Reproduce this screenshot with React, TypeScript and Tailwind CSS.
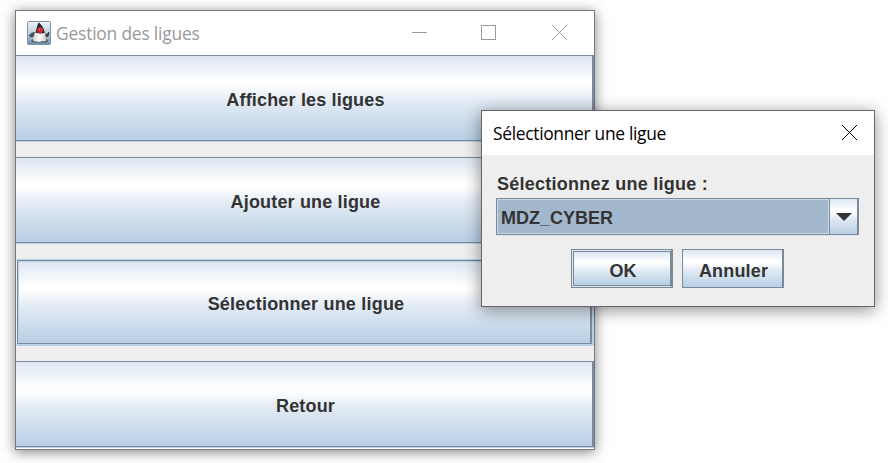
import type { ReactNode } from "react";

const metal =
  "bg-[linear-gradient(to_bottom,#dce7f2_0%,#ffffff_30%,#ffffff_34%,#e3ebf5_54%,#b8cfe5_100%)]";

function Duke() {
  return (
    <svg width="24" height="24" viewBox="0 0 24 24" className="block shrink-0">
      <defs>
        <linearGradient id="tile" x1="0" y1="0" x2="0" y2="1">
          <stop offset="0" stopColor="#eef4fa" />
          <stop offset="0.55" stopColor="#bccddd" />
          <stop offset="1" stopColor="#6f8ba8" />
        </linearGradient>
        <linearGradient id="belly" x1="0" y1="0" x2="1" y2="0">
          <stop offset="0" stopColor="#d9d6d3" />
          <stop offset="0.5" stopColor="#ffffff" />
          <stop offset="1" stopColor="#c9c5c0" />
        </linearGradient>
      </defs>
      <rect x="0.5" y="0.5" width="23" height="23" rx="1" fill="url(#tile)" stroke="#7c93aa" />
      <path d="M1.5 14.5L5 11.5L9 11L8 15.5L4 16.5Z" fill="#48525e" />
      <path d="M17 12L20 13L21.5 10.5L22.5 12L21.5 15.5L18 16.5Z" fill="#343d48" />
      <path d="M4 20Q6 22.5 9 21.5L19 21.5Q21 21 21 19L18 17L7 17Z" fill="#4d5a68" />
      <path d="M10 7C14 6 17.5 9 18.3 13C18.8 16 20 18.5 19 20C17.5 21 16 19.5 14 20.5C11 21.5 9 20 6.5 20.2C5.5 18 7.5 12 10 7Z" fill="url(#belly)" />
      <path d="M11.7 1.5C14.5 3.5 17.3 7.5 17.8 12C15.5 12.8 11 12.5 8.3 12C9.5 9 10 4 11.7 1.5Z" fill="#2a292b" />
      <path d="M8.5 11.5Q12.5 14 17.5 12L17.5 14L8 14Z" fill="#eeece9" />
      <circle cx="13.2" cy="9.2" r="2.9" fill="#d92531" />
      <circle cx="12.6" cy="8.2" r="0.8" fill="#f26d68" />
    </svg>
  );
}

function CloseGlyph({ className = "" }: { className?: string }) {
  return (
    <svg width="15" height="16" viewBox="0 0 15 16" fill="none" stroke="currentColor" className={`block ${className}`}>
      <path d="M0 0L15 15M15 0L0 15" />
    </svg>
  );
}

function MenuButton({ children }: { children: ReactNode }) {
  return (
    <div className="h-[87px] shrink-0 border-b border-[#b8cfe5]">
      <button
        className={`block h-[86px] w-full border-y border-r-2 border-[#7a8a99] pl-[3px] pt-1 text-center leading-[20px] tracking-[0.17px] ${metal}`}
      >
        {children}
      </button>
    </div>
  );
}

export default function App() {
  return (
    <main className="relative h-[463px] w-[888px] overflow-hidden bg-white font-['Liberation_Sans',Arial,sans-serif] text-[18px] font-bold text-[#333333]">
      <section className="absolute left-[15px] top-[10px] flex h-[440px] w-[580px] flex-col border border-[#777a7d] bg-[#eeeeee] shadow-[0_2px_12px_rgba(0,0,0,0.5)]">
        <header className="flex h-11 shrink-0 items-center bg-white pl-[11px] pr-[27px] text-[#999999]">
          <Duke />
          <h1 className="ml-[5px] flex-1 whitespace-nowrap font-['Open_Sans','Noto_Sans',sans-serif] text-[17.4px] font-normal tracking-[-0.19px]">
            Gestion des ligues
          </h1>
          <div className="flex items-center">
            <svg width="15" height="16" className="block" stroke="currentColor">
              <path d="M0 7.5H15" />
            </svg>
            <svg width="15" height="16" className="ml-[54px] block" fill="none" stroke="currentColor">
              <rect x="0.5" y="0.5" width="14" height="14" />
            </svg>
            <CloseGlyph className="ml-14" />
          </div>
        </header>
        <div className="flex flex-col">
          <MenuButton>Afficher les ligues</MenuButton>
          <div className="h-[15px]" />
          <MenuButton>Ajouter une ligue</MenuButton>
          <div className="h-[15px]" />
          <div className="h-[87px] border-b-2 border-l border-r-2 border-t border-[#b8cfe5] border-l-[#e8eff7]">
            <button className="block h-[84px] w-full border border-r-2 border-[#7a8a99]">
              <span className={`block h-full border-l border-t border-[#b8cfe5] pl-[3px] pt-8 leading-[20px] tracking-[0.21px] ${metal}`}>
                Sélectionner une ligue
              </span>
            </button>
          </div>
          <div className="h-[15px]" />
          <MenuButton>Retour</MenuButton>
          <div className="h-px bg-white" />
        </div>
      </section>

      <section className="absolute left-[481px] top-[110px] h-[197px] w-[394px] border border-[#646769] bg-[#eeeeee] shadow-[0_3px_16px_rgba(0,0,0,0.45)]">
        <header className="flex h-11 items-center justify-between bg-white pl-[11px] pr-[17px] text-black">
          <h2 className="whitespace-nowrap font-['Open_Sans','Noto_Sans',sans-serif] text-[17.4px] font-normal tracking-[-0.31px]">
            Sélectionner une ligue
          </h2>
          <CloseGlyph />
        </header>
        <div className="pl-[14px] pr-[15px] pt-[19px]">
          <div className="h-6 pl-px leading-[20px] tracking-[0.25px]">Sélectionnez une ligue :</div>
          <div className="flex h-[38px] border-b border-[#dce7f2]">
            <div className="h-[37px] flex-1 border border-r-0 border-[#7a8a99]">
              <div className="h-full border border-[#c8d9e9] bg-[#a3b8cc] pl-[3px] leading-[36px]">MDZ_CYBER</div>
            </div>
            <div className={`flex h-[37px] w-[30px] items-center justify-center border border-r-2 border-[#7a8a99] ${metal}`}>
              <svg width="16" height="8" className="block" fill="#333333">
                <path d="M0 0H16L8 8Z" />
              </svg>
            </div>
          </div>
          <div className="mt-[13px] flex gap-[9px] pl-[75px]">
            <button className="h-[39px] w-[102px] border border-r-2 border-[#7a8a99] bg-[#dce7f2] py-px pl-px">
              <span className={`block h-full border border-[#7a8a99] pl-[2px] pt-[9px] leading-[20px] ${metal}`}>OK</span>
            </button>
            <button className={`h-[39px] w-[102px] border border-r-2 border-[#7a8a99] pl-[2px] pt-1 leading-[20px] tracking-[0.17px] ${metal}`}>
              Annuler
            </button>
          </div>
        </div>
      </section>
    </main>
  );
}
